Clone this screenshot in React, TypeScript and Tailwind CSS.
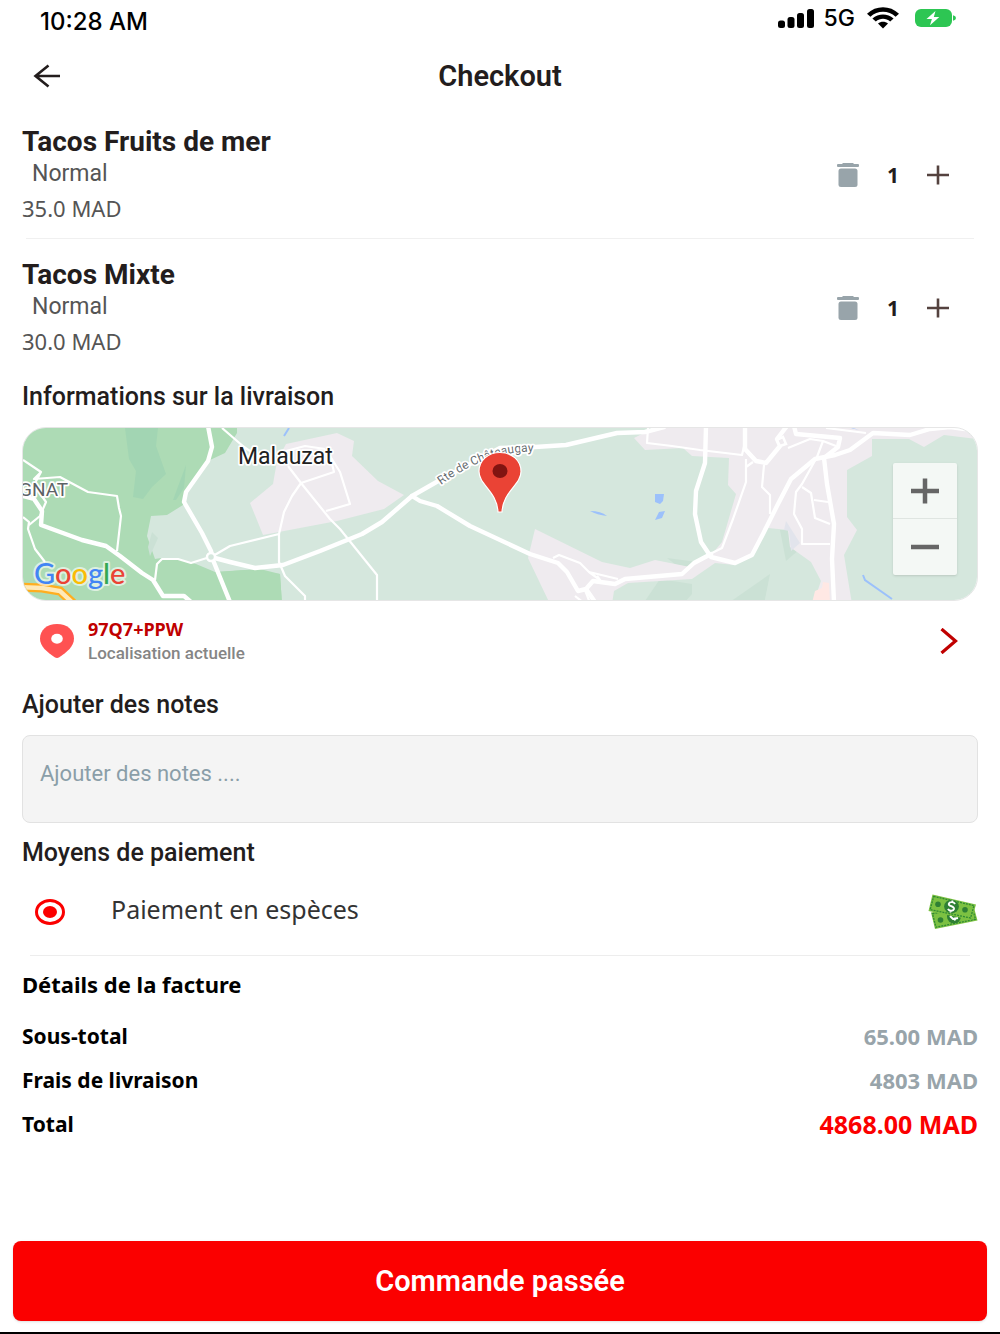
import { useId, useState } from "react";
import type { ReactNode } from "react";
import clsx from "clsx";

interface CartItem {
  id: string;
  name: string;
  variant: string;
  price: number;
  quantity: number;
}

const CART: CartItem[] = [
  { id: "fruits-de-mer", name: "Tacos Fruits de mer", variant: "Normal", price: 35, quantity: 1 },
  { id: "mixte", name: "Tacos Mixte", variant: "Normal", price: 30, quantity: 1 },
];

const DELIVERY_FEE = 4803;

function StatusBar() {
  return (
    <div className="flex h-11 items-start justify-between pr-11 pl-10 font-['Inter',sans-serif] font-medium text-black">
      <span className="mt-2 text-2xl leading-7">10:28 AM</span>
      <div className="mt-1 flex h-7 items-center">
        <svg className="h-5 w-9" viewBox="0 0 36 20" aria-hidden="true">
          <rect x="0" y="12.500" width="7" height="7.500" rx="2.500" />
          <rect x="9.500" y="9" width="7" height="11" rx="2.500" />
          <rect x="19" y="5" width="7" height="15" rx="2.500" />
          <rect x="29" y="1" width="7" height="19" rx="2.500" />
        </svg>
        <span className="ml-2.5 text-[23px] leading-7">5G</span>
        <svg className="ml-3 h-[22px] w-8" viewBox="0 0 32 22" aria-hidden="true">
          <path d="M0 6.800C9-1.800 23-1.800 32 6.800L28.600 9.700C21.500 3 10.500 3 3.400 9.700Z" />
          <path d="M5.400 11.500c6-5.500 15.200-5.500 21.200 0l-3.400 2.900c-4.200-3.700-10.200-3.700-14.400 0Z" />
          <path d="M11 16.500c2.800-2.500 7.200-2.500 10 0L16 21.500Z" />
        </svg>
        <svg className="ml-4 h-[18px] w-[41px]" viewBox="0 0 41 18" aria-hidden="true">
          <rect width="37" height="18" rx="6" fill="#2dc653" />
          <path d="M38 6.200q3 .8 3 2.800t-3 2.800Z" fill="#2dc653" />
          <path d="M20.500 2 11.500 10h5.400L15 16.300 24.300 8h-5.500Z" fill="#fff" />
        </svg>
      </div>
    </div>
  );
}

function Header() {
  return (
    <header className="grid h-16 grid-cols-[1fr_auto_1fr] items-center px-8">
      <button type="button" aria-label="Retour" className="flex size-8 items-center">
        <svg className="h-6 w-7" viewBox="0 0 28 24" fill="none" stroke="#231d1d" strokeWidth="2.600">
          <path d="M28 12H3.500M16.500 1.500 3.500 12l13 10.500" />
        </svg>
      </button>
      <h1 className="text-[29px] leading-8 font-semibold text-[#231d1d]">Checkout</h1>
    </header>
  );
}

interface CartRowProps {
  item: CartItem;
  divided: boolean;
  onAdd: () => void;
  onRemove: () => void;
}

function CartRow({ item, divided, onAdd, onRemove }: CartRowProps) {
  return (
    <li>
      <div className="flex items-center justify-between">
        <div>
          <h2 className="text-[28px] leading-8 font-bold text-[#231d1d]">{item.name}</h2>
          <p className="pl-2.5 text-[23px] leading-8 text-[#555]">{item.variant}</p>
          <p className="mt-0.5 font-['Noto_Sans',sans-serif] text-[22px] leading-8 text-[#555]">
            {item.price.toFixed(1)} MAD
          </p>
        </div>
        <div className="flex items-center pr-[25px]">
          <button type="button" onClick={onRemove} aria-label={`Retirer ${item.name}`} className="p-1">
            <svg className="h-6 w-[22px]" viewBox="0 0 22 24" fill="#98a4aa">
              <path d="M6 0h10l1 1h4a1 1 0 0 1 1 1v1a1 1 0 0 1-1 1H1a1 1 0 0 1-1-1V2a1 1 0 0 1 1-1h4Z" />
              <rect x="1.500" y="5.500" width="19" height="18.500" rx="2.500" />
            </svg>
          </button>
          <span className="w-15 text-center font-['Noto_Sans',sans-serif] text-[21px] leading-8 font-bold text-[#231d1d]">
            {item.quantity}
          </span>
          <button type="button" onClick={onAdd} aria-label={`Ajouter ${item.name}`} className="p-1">
            <svg className="size-[22px]" viewBox="0 0 22 22" fill="none" stroke="#54423f" strokeWidth="2.600">
              <path d="M0 11h22M11 1.500v19" />
            </svg>
          </button>
        </div>
      </div>
      {divided && <hr className="mx-1 mt-3.5 mb-5 border-[#f0f0f0]" />}
    </li>
  );
}

function MapDrawing() {
  const labelPath = useId();
  return (
    <svg
      className="block size-full"
      viewBox="23 429 954 172"
      preserveAspectRatio="xMidYMid slice"
      role="img"
      aria-label="Carte de la livraison"
    >
      <rect x="0" y="400" width="1000" height="230" fill="#d5e7dd" />

      {/* forests */}
      <g fill="#addbb5">
        <path d="M0 400H237V434L225 454 210 461 184 497 183 506 167 516 151 517 147 537 155 560 161 559 178 560 196 565 215 573 260 570 280 575 283 620H0Z" />
        <path d="M219 573 245 571 280 575 283 620H215Z" />
      </g>
      <g fill="#a2d5b3">
        <path d="M125 429h33l-2 18 10 28-14 13-9 12-10-2 3-26-7-12Z" />
        <path d="M186 466 184 489 176 501 173 501Z" />
      </g>
      <g fill="#cbe1d5">
        <path d="M152 533l6 6-8 18-2-9Z" />
        <path d="M660 580 692 585 692 595 683 605H643Z" />
        <path d="M770 575 727 605h37Z" />
        <path d="M667 559 712 565 692 578Z" />
        <path d="M780 531 786 562 800 550 788 531Z" />
      </g>

      {/* built-up areas */}
      <g fill="#efebef">
        <path d="M286 445 337 434 354 442 352 457 378 482 404 496 384 510 337 522 263 536 250 504 273 485 277 462Z" />
        <path d="M535 530 602 563 630 569 655 561 690 568 712 555 722 543 736 495 728 486 729 459 692 457 683 449 645 451 634 439 662 425H960L977 440 944 436 924 448 909 440 872 440V457L847 471V518L857 531 844 556 852 605H813L821 582 811 563 790 548 788 531 768 529 752 556 735 566 715 564 692 580 628 584 614 592 612 605H550L528 559Z" />
      </g>
      <path d="m786 522 14 22-9 8-2-20-5-1Z" fill="#e2e4ec" />
      <path d="m823 583 6 1 1 20h-18l3-12 7-3Z" fill="#ffe8e4" />

      {/* water */}
      <g fill="#9cc1fb">
        <path d="M655 495h9l-1 7-3 3-5-2ZM659 513l6-1-3 7-7 2ZM590 512q11 0 17 5-10-1-17-5ZM850 428l9 3-8-2Z" />
      </g>
      <path d="M289 429 284 437M863 576l2 5 27 19" fill="none" stroke="#9cc1fb" strokeWidth="2" />

      {/* minor roads */}
      <g fill="none" stroke="#fff" strokeWidth="2.200" strokeLinejoin="round">
        <path d="M23 461 41 473 34 480 60 478 88 493 117 497 119 509 121 517 117 552M23 518 29 523 28 530 35 550 45 563M41 473 28 497M39 493 46 503 40 517 29 526" />
        <path d="M155 581 157 565 162 560 178 560 191 564 213 557 230 547 279 535M222 429 244 448 262 460M288 467 301 484 292 497 284 513 279 535V563L285 577 305 597V603" />
        <path d="M301 484 334 473 330 457 340 473 350 505 326 512M301 484 330 520 340 530 377 576V603M286 452 305 447 325 450" />
        <path d="M553 559 559 556 580 564 589 573 618 580M589 573 600 581 597 577" />
        <path d="M648 429 647 444 672 447 700 451 742 456 745 443M746 460V483L733 520 722 549 706 557M746 468 753 463M764 466 762 488 770 496V515M788 449 810 440 823 442 836 447M823 442 817 458 802 485 796 493 794 515 802 530V545H830M802 488 811 494 815 519 830 525M814 501 828 503M826 429 866 434" />
        <path d="M575 597 584 604M585 591 590 604" />
      </g>

      {/* main roads */}
      <g fill="none" stroke="#fff" strokeWidth="4.400" strokeLinejoin="round" strokeLinecap="round">
        <path d="M208 427 212 448 208 462 186 493 184 503 202 534 211 552 213 561 230 603" />
        <path d="M211 558 230 563 255 569 283 566 320 552 362 535 382 523 412 497 440 481 500 449 535 448 566 446 617 434 645 433 664 428" />
        <path d="M412 497 420 502 437 507 470 527 530 555 558 564 567 573 578 592 586 590 593 582 615 585 625 580 682 575 694 564 711 555" />
        <path d="M586 590 595 603M706 427 705 464 696 492 695 515 701 543 711 558 735 564 752 556 763 535 778 505 791 480 815 460 835 456 850 451 873 434 910 436 930 430 950 428 965 430" />
        <path d="M745 427V450L756 462 766 464 780 447 777 440 787 427M794 427 796 435 840 439 838 448 824 459 827 485 834 525 832 560 834 603" />
        <path d="M23 497 34 500 42 512 41 526 82 541 106 547 120 557 142 574 153 581 163 597 184 597 191 603" />
      </g>
      <path d="M780 447 786 445 783 438 777 441Z" fill="#efebef" stroke="#fff" strokeWidth="2.500" />
      <circle cx="211" cy="558" r="4" fill="#d5e7dd" stroke="#fff" strokeWidth="2.500" />
      <path d="M20 588 42 589 60 592 75 606" fill="none" stroke="#ffae1f" strokeWidth="9" />
      <path d="M20 588 42 589 60 592 75 606" fill="none" stroke="#ffe9b8" strokeWidth="4.500" />

      {/* labels */}
      <path id={labelPath} d="M441 486Q490 450 536 453" fill="none" />
      <g stroke="#fff" strokeWidth="3.500" strokeLinejoin="round" paintOrder="stroke" className="font-['Roboto',sans-serif]">
        <text x="238" y="465" fontSize="23" fill="#212121">
          Malauzat
        </text>
        <text x="19" y="497" fontSize="19" fill="#5d6266">
          GNAT
        </text>
        <text fontSize="12" fill="#666c70">
          <textPath href={`#${labelPath}`}>Rte de Châteaugay</textPath>
        </text>
      </g>
      <text
        x="34"
        y="585"
        fontSize="29"
        stroke="#fff"
        strokeOpacity="0.6"
        strokeWidth="4"
        strokeLinejoin="round"
        paintOrder="stroke"
        className="font-['Lato',sans-serif] font-medium"
      >
        <tspan fill="#4285f4">G</tspan>
        <tspan fill="#ea4335">o</tspan>
        <tspan fill="#fbbc04">o</tspan>
        <tspan fill="#4285f4">g</tspan>
        <tspan fill="#34a853">l</tspan>
        <tspan fill="#ea4335">e</tspan>
      </text>

      {/* marker */}
      <path
        d="M500 453.500C488 453.500 479 461.500 479 472.500 479 486 497 492 498 513H502C503 492 521 486 521 472.500 521 461.500 512 453.500 500 453.500Z"
        fill="#ea4335"
        stroke="#fff"
        strokeWidth="1.200"
      />
      <ellipse cx="500" cy="472" rx="7.500" ry="7" fill="#811411" />
    </svg>
  );
}

function DeliveryMap() {
  return (
    <div className="relative h-[174px] overflow-hidden rounded-3xl border border-[#e6e6e6]">
      <MapDrawing />
      <div className="absolute top-[35px] right-5 flex w-16 flex-col rounded-xs bg-[#f4f8f5] shadow">
        <button type="button" aria-label="Zoom avant" className="flex h-14 items-center justify-center border-b border-[#dfe5e1]">
          <svg className="h-[26px] w-7" viewBox="0 0 28 26" stroke="#666" strokeWidth="4.500">
            <path d="M0 13h28M14 .500v25" />
          </svg>
        </button>
        <button type="button" aria-label="Zoom arrière" className="flex h-14 items-center justify-center">
          <svg className="h-[26px] w-7" viewBox="0 0 28 26" stroke="#666" strokeWidth="4.500">
            <path d="M0 13h28" />
          </svg>
        </button>
      </div>
    </div>
  );
}

function AddressButton() {
  return (
    <button type="button" className="flex h-20 w-full items-center pr-5 pl-[18px] text-left">
      <svg className="h-[34px] w-[34px] shrink-0" viewBox="0 0 34 34" aria-hidden="true">
        <path
          d="M17 0C7 0 0 6 0 14.500c0 8 7 13.500 14.700 18.700q2.300 1.400 4.600 0C27 28 34 22.500 34 14.500 34 6 27 0 17 0Z"
          fill="#ff5252"
        />
        <ellipse cx="17" cy="14.800" rx="5.800" ry="5" fill="#fff" />
      </svg>
      <span className="ml-3.5 flex flex-1 flex-col">
        <span className="font-['Noto_Sans',sans-serif] text-lg leading-6 font-bold text-[#c00000]">97Q7+PPW</span>
        <span className="text-[17px] leading-6 font-medium text-[#858585]">Localisation actuelle</span>
      </span>
      <svg className="h-[26px] w-[18px]" viewBox="0 0 18 26" fill="none" stroke="#c00000" strokeWidth="3.200" aria-hidden="true">
        <path d="M1.500 1 15.500 13 1.500 25" />
      </svg>
    </button>
  );
}

function CashIcon() {
  return (
    <svg className="h-9 w-[50px]" viewBox="0 0 50 36" aria-hidden="true">
      <path d="M3 18.500 45 10 49.500 26.500 7 35Z" fill="#7cc142" />
      <path d="M4.500 19.800 43.800 11.800 47.500 25.300 8 33.200Z" fill="none" stroke="#2f8a34" strokeWidth="1.300" strokeDasharray="2 1" />
      <circle cx="12.500" cy="26" r="2.800" fill="#2f8034" />
      <circle cx="26" cy="22.500" r="7" fill="#2f8034" />
      <path d="m22 22 3 3 5-1M27 26.500l-.5-3" fill="none" stroke="#fff" strokeWidth="2" />
      <path d="M4.500.500 48 10.500 43.500 26 .500 17Z" fill="#7cc142" />
      <path d="M5.700 2.400 46 11.600 42.600 24 2.200 15.600Z" fill="none" stroke="#2f8a34" strokeWidth="1.300" strokeDasharray="2 1" />
      <circle cx="10" cy="10.300" r="2.800" fill="#2f8034" />
      <circle cx="37" cy="15.800" r="2.800" fill="#2f8034" />
      <ellipse cx="23.500" cy="12.500" rx="7.400" ry="6.700" fill="#2f8034" />
      <path
        d="M27 10C26 7.800 21.500 7.400 20.800 9.800 20.300 12.500 26.500 12 26 15 25.300 17.500 21 17 20 14.800M24.600 6.500 24 8.500M22.600 16.500 22.200 18.500"
        fill="none"
        stroke="#fff"
        strokeWidth="1.900"
      />
    </svg>
  );
}

function SectionTitle({ children }: { children: ReactNode }) {
  return <h2 className="text-[25px] leading-8 font-medium text-[#231d1d]">{children}</h2>;
}

interface BillLineProps {
  label: string;
  amount: string;
  total?: boolean;
}

function BillLine({ label, amount, total = false }: BillLineProps) {
  return (
    <div className="flex items-center justify-between">
      <dt className="text-[21px] leading-8 text-black">{label}</dt>
      <dd className={clsx("leading-8", total ? "text-[25px] text-[#fb0000]" : "text-[22px] text-[#98a4aa]")}>{amount}</dd>
    </div>
  );
}

export default function App() {
  const [items, setItems] = useState(CART);
  const [notes, setNotes] = useState("");

  const changeQuantity = (id: string, delta: number) => {
    setItems((current) =>
      current
        .map((item) => (item.id === id ? { ...item, quantity: item.quantity + delta } : item))
        .filter((item) => item.quantity > 0)
    );
  };

  const subtotal = items.reduce((sum, item) => sum + item.price * item.quantity, 0);

  return (
    <div className="flex min-h-screen flex-col border-b-2 border-black bg-white font-['Roboto',sans-serif]">
      <StatusBar />
      <Header />

      <main className="px-[22px] pt-[18px] pb-6">
        <ul>
          {items.map((item, index) => (
            <CartRow
              key={item.id}
              item={item}
              divided={index < items.length - 1}
              onAdd={() => changeQuantity(item.id, 1)}
              onRemove={() => changeQuantity(item.id, -1)}
            />
          ))}
        </ul>

        <section className="mt-6 flex flex-col gap-3.5">
          <SectionTitle>Informations sur la livraison</SectionTitle>
          <DeliveryMap />
        </section>
        <AddressButton />

        <section className="mt-2 flex flex-col gap-3.5">
          <SectionTitle>
            <label htmlFor="notes">Ajouter des notes</label>
          </SectionTitle>
          <textarea
            id="notes"
            value={notes}
            onChange={(event) => setNotes(event.target.value)}
            placeholder="Ajouter des notes ...."
            className="block h-[88px] w-full resize-none rounded-lg border border-[#e2e2e2] bg-[#f4f4f4] px-[17px] py-[22px] text-[22px] leading-8 text-[#231d1d] placeholder:text-[#8a9ea8]"
          />
        </section>

        <section className="mt-3.5">
          <SectionTitle>Moyens de paiement</SectionTitle>
          <label className="flex h-[86px] items-center pl-[13px]">
            <input
              type="radio"
              name="payment"
              defaultChecked
              className="h-[26px] w-[30px] appearance-none rounded-[50%] border-[3px] border-[#fb0000] bg-clip-content px-[5px] py-1 checked:bg-[#fb0000]"
            />
            <span className="ml-[46px] flex-1 pb-1.5 font-['Noto_Sans',sans-serif] text-[25px] leading-8 text-[#333]">
              Paiement en espèces
            </span>
            <CashIcon />
          </label>
          <hr className="mx-2 border-[#ededed]" />
        </section>

        <section className="mt-3 font-['Noto_Sans',sans-serif] font-bold">
          <h2 className="text-[22px] leading-8 text-black">Détails de la facture</h2>
          <dl className="mt-5 flex flex-col gap-3">
            <BillLine label="Sous-total" amount={`${subtotal.toFixed(2)} MAD`} />
            <BillLine label="Frais de livraison" amount={`${DELIVERY_FEE} MAD`} />
            <BillLine label="Total" amount={`${(subtotal + DELIVERY_FEE).toFixed(2)} MAD`} total />
          </dl>
        </section>
      </main>

      <div className="mt-auto px-[13px] pb-[11px]">
        <button
          type="button"
          className="h-20 w-full rounded-lg bg-[#fb0000] text-[29px] leading-8 font-semibold text-white shadow-sm"
        >
          Commande passée
        </button>
      </div>
    </div>
  );
}
